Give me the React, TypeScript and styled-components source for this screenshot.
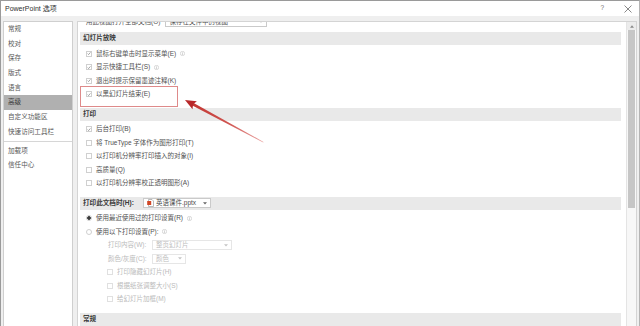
import React from "react";
import styled, { createGlobalStyle } from "styled-components";

const GlobalStyle = createGlobalStyle`
  html, body {
    margin: 0;
    padding: 0;
    background: #ffffff;
  }
  body {
    font-family: "Liberation Sans", "Noto Sans CJK SC", sans-serif;
  }
`;

type Item =
  | { kind: "check"; label: string; checked?: boolean; info?: boolean; indent?: boolean; disabled?: boolean }
  | { kind: "radio"; label: string; checked?: boolean; info?: boolean }
  | { kind: "select"; label: string; value: string; width: number; disabled?: boolean };

const navItems = ["常规", "校对", "保存", "版式", "语言", "高级", "自定义功能区", "快速访问工具栏"];
const navExtra = ["加载项", "信任中心"];

const slideShow: Item[] = [
  { kind: "check", label: "鼠标右键单击时显示菜单(E)", checked: true, info: true },
  { kind: "check", label: "显示快捷工具栏(S)", checked: true, info: true },
  { kind: "check", label: "退出时提示保留墨迹注释(K)", checked: true },
  { kind: "check", label: "以黑幻灯片结束(E)", checked: true },
];

const printing: Item[] = [
  { kind: "check", label: "后台打印(B)", checked: true },
  { kind: "check", label: "将 TrueType 字体作为图形打印(T)" },
  { kind: "check", label: "以打印机分辨率打印插入的对象(I)" },
  { kind: "check", label: "高质量(Q)" },
  { kind: "check", label: "以打印机分辨率校正透明图形(A)" },
];

const printDoc: Item[] = [
  { kind: "radio", label: "使用最近使用过的打印设置(R)", checked: true, info: true },
  { kind: "radio", label: "使用以下打印设置(P):", info: true },
  { kind: "select", label: "打印内容(W):", value: "整页幻灯片", width: 80, disabled: true },
  { kind: "select", label: "颜色/灰度(C):", value: "颜色", width: 34, disabled: true },
  { kind: "check", label: "打印隐藏幻灯片(H)", indent: true, disabled: true },
  { kind: "check", label: "根据纸张调整大小(S)", indent: true, disabled: true },
  { kind: "check", label: "给幻灯片加框(M)", indent: true, disabled: true },
];

const Caret = ({ color = "#666" }: { color?: string }) => (
  <svg width="4" height="3" viewBox="0 0 4 3">
    <path d="M0 0.3 L4 0.3 L2 2.6 Z" fill={color} />
  </svg>
);

const InfoIcon = () => (
  <svg width="5" height="5" viewBox="0 0 10 10">
    <circle cx="5" cy="5" r="4.3" fill="none" stroke="#b4b4b4" strokeWidth="1" />
    <rect x="4.4" y="4.2" width="1.2" height="3.6" fill="#b4b4b4" />
    <rect x="4.4" y="2.2" width="1.2" height="1.2" fill="#b4b4b4" />
  </svg>
);

const CheckMark = ({ color }: { color: string }) => (
  <svg width="5" height="5" viewBox="0 0 10 10">
    <path d="M1.5 5.2 L4 7.6 L8.6 2.2" fill="none" stroke={color} strokeWidth="1.5" />
  </svg>
);

const PptxIcon = () => (
  <svg width="7" height="8" viewBox="0 0 7 8">
    <path d="M1.5 0.5 H5 L6.5 2 V7.5 H1.5 Z" fill="#fff" stroke="#a8a8a8" strokeWidth="0.8" />
    <rect x="0.2" y="2" width="4" height="4" fill="#d24726" />
  </svg>
);

export default function App() {
  const renderItem = (item: Item, i: number) => {
    if (item.kind === "select") {
      return (
        <Row key={i} $indent={28} $disabled={item.disabled}>
          <FieldLabel>{item.label}</FieldLabel>
          <Select $width={item.width} $disabled={item.disabled}>
            <span>{item.value}</span>
            <Caret color={item.disabled ? "#c4c4c4" : "#666"} />
          </Select>
        </Row>
      );
    }
    if (item.kind === "radio") {
      return (
        <Row key={i}>
          <Radio $checked={item.checked} />
          <span>{item.label}</span>
          {item.info && <InfoIcon />}
        </Row>
      );
    }
    return (
      <Row key={i} $indent={item.indent ? 27 : 6} $disabled={item.disabled}>
        <Box $disabled={item.disabled}>
          {item.checked && <CheckMark color="#6a6a6a" />}
        </Box>
        <span>{item.label}</span>
        {item.info && <InfoIcon />}
      </Row>
    );
  };

  return (
    <>
      <GlobalStyle />
      <Window>
        <TitleBar>
          <span>PowerPoint 选项</span>
          <TitleButtons>
            <HelpMark>?</HelpMark>
            <svg width="8" height="8" viewBox="0 0 8 8">
              <path d="M0.5 0.5 L7.5 7.5 M7.5 0.5 L0.5 7.5" stroke="#6a6a6a" strokeWidth="0.8" />
            </svg>
          </TitleButtons>
        </TitleBar>
        <Body>
          <Nav>
            {navItems.map((n) => (
              <NavItem key={n} $active={n === "高级"}>
                {n}
              </NavItem>
            ))}
            <NavDivider />
            {navExtra.map((n) => (
              <NavItem key={n}>{n}</NavItem>
            ))}
          </Nav>
          <Content>
            <Scroller>
              {/* scrolled list: this row sits half under the top edge */}
              <CutRow>
                <span>用此视图打开全部文档(O)</span>
                <Select $width={102}>
                  <span>保存在文件中的视图</span>
                  <Caret />
                </Select>
              </CutRow>
              <Section>幻灯片放映</Section>
              {slideShow.map(renderItem)}
              <Section>打印</Section>
              {printing.map(renderItem)}
              <Section>
                <DocLabel>打印此文档时(H):</DocLabel>
                <Select $width={68}>
                  <DocValue>
                    <PptxIcon />
                    <span>英语课件.pptx</span>
                  </DocValue>
                  <Caret />
                </Select>
              </Section>
              {printDoc.map(renderItem)}
              <Section>常规</Section>
            </Scroller>
            <ScrollBar>
              <ScrollArrow>
                <svg width="4" height="3" viewBox="0 0 4 3">
                  <path d="M0 2.7 L4 2.7 L2 0.3 Z" fill="#8a8a8a" />
                </svg>
              </ScrollArrow>
              <Thumb />
            </ScrollBar>
          </Content>
        </Body>
        <Highlight />
        <ArrowLayer width="640" height="326" viewBox="0 0 640 326">
          <defs>
            <linearGradient id="arrowFade" gradientUnits="userSpaceOnUse" x1="0" y1="0" x2="89" y2="0">
              <stop offset="0" stopColor="#c0302c" />
              <stop offset="0.55" stopColor="#cf5450" />
              <stop offset="1" stopColor="#eba4a2" />
            </linearGradient>
          </defs>
          <g transform="translate(185 100) rotate(28.3)">
            <polygon points="8,-1.5 89,-0.35 89,0.35 8,1.5" fill="url(#arrowFade)" />
            <polygon points="0,0 11,-4.6 9.2,0 11,4.6" fill="#b8282a" />
          </g>
        </ArrowLayer>
      </Window>
    </>
  );
}

const Window = styled.div`
  position: relative;
  width: 640px;
  height: 326px;
  box-sizing: border-box;
  border-top: 1px solid #9a9a9a;
  border-left: 1px solid #9a9a9a;
  border-right: 1px solid #b4b4b4;
  background: #efefef;
  display: flex;
  flex-direction: column;
  overflow: hidden;
  color: #505050;
`;

const TitleBar = styled.div`
  height: 15px;
  flex: none;
  background: #ffffff;
  display: flex;
  align-items: center;
  padding: 0 7px 0 4px;
  font-size: 7px;
  line-height: 1;
  color: #303030;
`;

const TitleButtons = styled.div`
  margin-left: auto;
  display: flex;
  align-items: center;
  gap: 20px;
`;

const HelpMark = styled.span`
  font-size: 6.5px;
  color: #707070;
`;

const Body = styled.div`
  flex: 1;
  display: flex;
  padding: 5px 2px 0 2px;
  min-height: 0;
`;

const Nav = styled.nav`
  width: 70px;
  flex: none;
  box-sizing: border-box;
  background: #ffffff;
  border: 1px solid #cfcfcf;
  border-bottom: none;
  display: flex;
  flex-direction: column;
`;

const NavItem = styled.div<{ $active?: boolean }>`
  height: 14.7px;
  flex: none;
  display: flex;
  align-items: center;
  padding-left: 4px;
  font-size: 6.6px;
  line-height: 1;
  background: ${(p) => (p.$active ? "#b0b0b0" : "transparent")};
  color: ${(p) => (p.$active ? "#3c3c3c" : "#585858")};
`;

const NavDivider = styled.div`
  height: 1px;
  flex: none;
  margin: 1px 0 2px;
  background: #d6d6d6;
`;

const Content = styled.div`
  flex: 1;
  margin-left: 4px;
  background: #ffffff;
  border: 1px solid #d4d4d4;
  border-bottom: none;
  display: flex;
  overflow: hidden;
`;

const Scroller = styled.div`
  flex: 1;
  overflow: hidden;
  padding: 0 5px 0 2px;
  display: flex;
  flex-direction: column;
`;

const Row = styled.div<{ $indent?: number; $disabled?: boolean }>`
  height: 13.5px;
  flex: none;
  display: flex;
  align-items: center;
  gap: 4px;
  padding-left: ${(p) => p.$indent ?? 6}px;
  font-size: 6.5px;
  line-height: 1;
  white-space: nowrap;
  color: ${(p) => (p.$disabled ? "#bababa" : "#505050")};
`;

const CutRow = styled(Row)`
  margin-top: -7px;
  margin-bottom: -3px;
  gap: 5px;
`;

const Section = styled.div`
  height: 13px;
  flex: none;
  margin: 6.5px 0 2px;
  padding-left: 3px;
  display: flex;
  align-items: center;
  gap: 9px;
  background: #e9e9e9;
  font-size: 6.6px;
  line-height: 1;
  font-weight: 700;
  color: #3a3a3a;
  white-space: nowrap;
`;

const DocLabel = styled.span`
  width: 51px;
`;

const DocValue = styled.span`
  display: flex;
  align-items: center;
  gap: 2px;
  font-weight: 400;
  color: #4a4a4a;
`;

const Box = styled.span<{ $disabled?: boolean }>`
  width: 6px;
  height: 6px;
  flex: none;
  box-sizing: border-box;
  border: 1px solid ${(p) => (p.$disabled ? "#e0e0e0" : "#d0d0d0")};
  background: #ffffff;
  display: flex;
  align-items: center;
  justify-content: center;
`;

const Radio = styled.span<{ $checked?: boolean }>`
  width: 6px;
  height: 6px;
  flex: none;
  box-sizing: border-box;
  border-radius: 50%;
  border: 1px solid #d0d0d0;
  background: ${(p) => (p.$checked ? "radial-gradient(circle, #3c3c3c 0 1.6px, #ffffff 1.9px)" : "#ffffff")};
`;

const FieldLabel = styled.span`
  width: 40px;
  flex: none;
`;

const Select = styled.div<{ $width: number; $disabled?: boolean }>`
  width: ${(p) => p.$width}px;
  height: 10px;
  flex: none;
  box-sizing: border-box;
  padding: 0 3px 0 3px;
  display: flex;
  align-items: center;
  justify-content: space-between;
  background: #ffffff;
  border: 1px solid ${(p) => (p.$disabled ? "#e6e6e6" : "#cacaca")};
  font-size: 6.5px;
  font-weight: 400;
  color: ${(p) => (p.$disabled ? "#bdbdbd" : "#4e4e4e")};
`;

const ScrollBar = styled.div`
  width: 9px;
  flex: none;
  display: flex;
  flex-direction: column;
  background: #f7f7f7;
  border-left: 1px solid #e4e4e4;
`;

const ScrollArrow = styled.div`
  height: 8px;
  flex: none;
  display: flex;
  align-items: center;
  justify-content: center;
  background: #ececec;
`;

const Thumb = styled.div`
  height: 178px;
  margin: 0 1px;
  background: #c6c6c6;
`;

const Highlight = styled.div`
  position: absolute;
  left: 79px;
  top: 85px;
  width: 98px;
  height: 21px;
  box-sizing: border-box;
  border: 1px solid #de8a8a;
  pointer-events: none;
`;

const ArrowLayer = styled.svg`
  position: absolute;
  left: -1px;
  top: -1px;
  pointer-events: none;
`;
